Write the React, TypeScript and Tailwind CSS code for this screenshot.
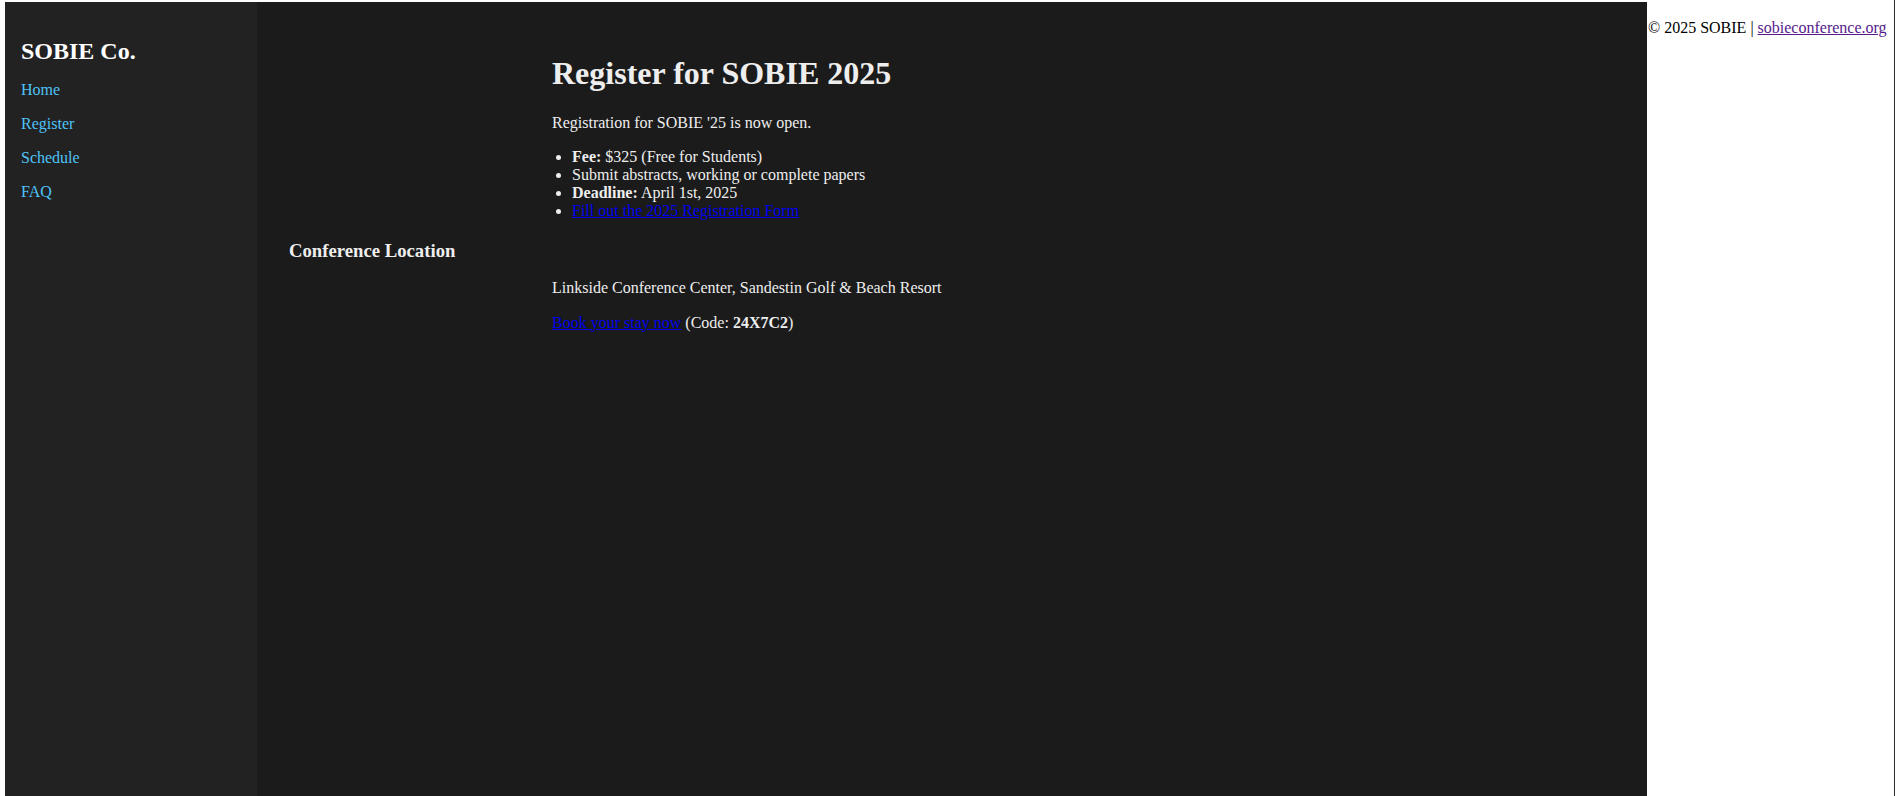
import React from "react";

export default function App() {
  const serif = { fontFamily: '"Liberation Serif", "Times New Roman", serif' };
  return (
    <div
      className="flex min-h-[796px] bg-white pl-[5px] pt-[2px] border-r border-[#2b2b2b] text-[16px]"
      style={serif}
    >
      <aside className="w-[252px] shrink-0 bg-[#222222] pl-[16px] pt-[35px]">
        <h2 className="text-[24px] leading-[28px] font-bold text-white">SOBIE Co.</h2>
        <nav className="mt-[16px] flex flex-col gap-[16px] leading-[18px] text-[#4fc3f7]">
          <a href="#">Home</a>
          <a href="#">Register</a>
          <a href="#">Schedule</a>
          <a href="#">FAQ</a>
        </nav>
      </aside>
      <main className="w-[1390px] shrink-0 bg-[#1b1b1b] text-[#eeeeee] pt-[53px]">
        <div className="ml-[295px]">
          <h1 className="text-[32px] leading-[37px] font-bold">Register for SOBIE 2025</h1>
          <p className="mt-[22px] leading-[18px]">Registration for SOBIE '25 is now open.</p>
          <ul className="mt-[16px] list-disc pl-[20px] leading-[18px]">
            <li>
              <b>Fee:</b> $325 (Free for Students)
            </li>
            <li>Submit abstracts, working or complete papers</li>
            <li>
              <b>Deadline:</b> April 1st, 2025
            </li>
            <li>
              <a href="#" className="text-[#0000ee] underline">
                Fill out the 2025 Registration Form
              </a>
            </li>
          </ul>
        </div>
        <h3 className="ml-[32px] mt-[20px] text-[18.72px] leading-[21px] font-bold">Conference Location</h3>
        <div className="ml-[295px]">
          <p className="mt-[18px] leading-[18px]">Linkside Conference Center, Sandestin Golf &amp; Beach Resort</p>
          <p className="mt-[16.6px] leading-[18px]">
            <a href="#" className="text-[#0000ee] underline">
              Book your stay now
            </a>{" "}
            (Code: <b>24X7C2</b>)
          </p>
        </div>
      </main>
      <footer className="flex-1 pt-[16.5px] pl-[1px] text-black leading-[18px]">
        © 2025 SOBIE | <a href="#" className="text-[#551a8b] underline">sobieconference.org</a>
      </footer>
    </div>
  );
}
